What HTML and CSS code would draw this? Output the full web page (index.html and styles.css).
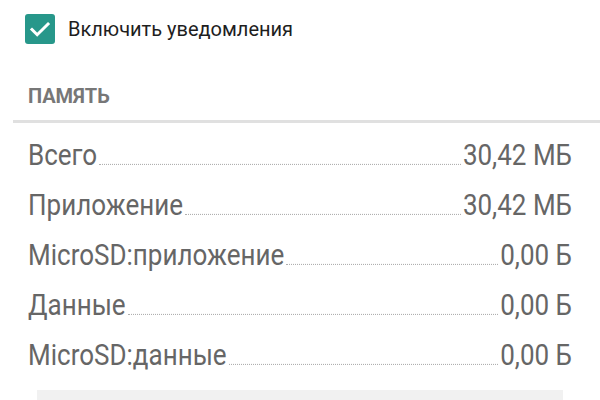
FILE: index.html
```html
<!DOCTYPE html>
<html lang="ru">
<head>
<meta charset="utf-8">
<link rel="stylesheet" href="styles.css">
</head>
<body>
<div class="screen">
  <label class="check-row">
    <span class="checkbox">
      <svg viewBox="0 0 24 24" width="24" height="24"><path d="M4 12.5l5.2 5.2L20 7" fill="none" stroke="#fff" stroke-width="3" stroke-linecap="square"/></svg>
    </span>
    <span class="check-label">Включить уведомления</span>
  </label>
  <div class="section-title">ПАМЯТЬ</div>
  <div class="divider"></div>
  <div class="rows">
    <div class="row"><span class="name">Всего</span><span class="leader"></span><span class="value">30,42 МБ</span></div>
    <div class="row"><span class="name">Приложение</span><span class="leader"></span><span class="value">30,42 МБ</span></div>
    <div class="row"><span class="name">MicroSD:приложение</span><span class="leader"></span><span class="value">0,00 Б</span></div>
    <div class="row"><span class="name">Данные</span><span class="leader"></span><span class="value">0,00 Б</span></div>
    <div class="row"><span class="name">MicroSD:данные</span><span class="leader"></span><span class="value">0,00 Б</span></div>
  </div>
  <div class="bottom-box"></div>
</div>
</body>
</html>
```

FILE: styles.css
```css
html, body {
  margin: 0;
  padding: 0;
  background: #fff;
}
body {
  font-family: Roboto, "Liberation Sans", sans-serif;
  width: 600px;
  height: 400px;
  overflow: hidden;
}
.screen {
  display: flex;
  flex-direction: column;
}
.check-row {
  display: flex;
  align-items: center;
  gap: 13px;
  padding: 14px 0 0 25px;
  height: 30px;
}
.checkbox {
  width: 30px;
  height: 30px;
  border-radius: 3px;
  background: #27978a;
  display: flex;
  align-items: center;
  justify-content: center;
}
.check-label {
  font-size: 20px;
  color: #1e1e1e;
}
.section-title {
  margin: 42px 0 0 28px;
  font-size: 20px;
  font-weight: bold;
  color: #777;
  line-height: 20px;
}
.divider {
  margin: 14px 0 0 13px;
  height: 3px;
  background: #e0e0e0;
}
.rows {
  display: flex;
  flex-direction: column;
  padding: 18px 28px 0 28px;
}
.row {
  display: flex;
  align-items: baseline;
  height: 50px;
  font-size: 26px;
  color: #666;
  line-height: 30px;
  transform: scaleY(1.12);
  transform-origin: 0 24px;
}
.leader {
  flex: 1;
  border-bottom: 1px dotted #b0b0b0;
  margin: 0 2px;
}
.bottom-box {
  margin: -1px 37px 0 37px;
  height: 20px;
  background: #f1f1f1;
}
```
